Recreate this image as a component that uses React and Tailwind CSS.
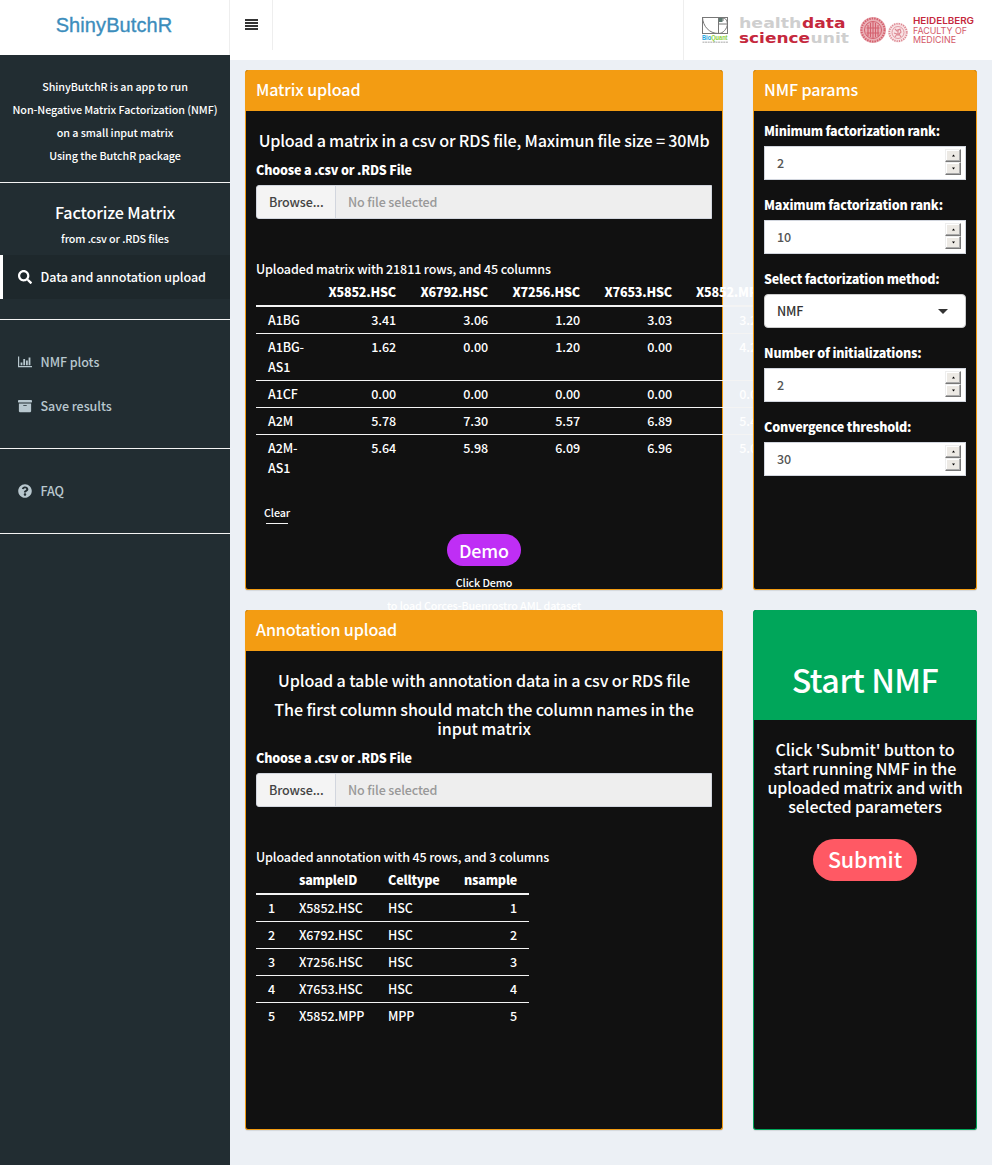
import React from "react";
import { FaSearch, FaArchive, FaQuestionCircle } from "react-icons/fa";

const matrixHead = ["X5852.HSC", "X6792.HSC", "X7256.HSC", "X7653.HSC", "X5852.MPP"];
const matrixRows = [
  ["A1BG", "3.41", "3.06", "1.20", "3.03", "3.22"],
  ["A1BG-AS1", "1.62", "0.00", "1.20", "0.00", "4.22"],
  ["A1CF", "0.00", "0.00", "0.00", "0.00", "0.00"],
  ["A2M", "5.78", "7.30", "5.57", "6.89", "5.42"],
  ["A2M-AS1", "5.64", "5.98", "6.09", "6.96", "5.02"],
];
const annotationRows = [
  ["1", "X5852.HSC", "HSC", "1"],
  ["2", "X6792.HSC", "HSC", "2"],
  ["3", "X7256.HSC", "HSC", "3"],
  ["4", "X7653.HSC", "HSC", "4"],
  ["5", "X5852.MPP", "MPP", "5"],
];

function ChartIcon({ className }) {
  return (
    <svg viewBox="0 0 14 14" className={className} fill="currentColor">
      <path d="M0 1.500h1.200v9.500H14V12.300H0zM2.600 7.500h1.800v2.700H2.600zM5.300 4h1.800v6.200H5.300zM8 5.500h1.800v4.700H8zM10.600 2.500h1.800v7.700h-1.800z" />
    </svg>
  );
}

function BioQuantLogo() {
  return (
    <svg width="30" height="30" viewBox="0 0 30 30" className="block shrink-0">
      <g fill="none" stroke="#777" strokeWidth="1">
        <rect x="1.500" y="2.500" width="25" height="16" />
        <path d="M1.500 2.500C2 11 8 18.500 17.500 18.500V2.500M17.500 18.500C22 18.500 26 14 26.500 9H17.500M22 2.500V6M17.500 9C17.500 5 19 3 22 3C25 3 26 6 26.500 9" />
      </g>
      <path d="M18 3h3.500v4H18z" fill="#5e7a72" />
      <text x="1" y="25" textLength="25.500" lengthAdjust="spacingAndGlyphs" fontFamily="Liberation Sans, sans-serif" fontWeight="700" fontSize="7.600" letterSpacing="0">
        <tspan fill="#21a5e0">Bio</tspan><tspan fill="#8ccf3c">Quant</tspan>
      </text>
      <path d="M1.500 27.300H27" stroke="#c4c4c4" strokeWidth="1.500" strokeDasharray="2 .6" />
    </svg>
  );
}

function HealthDataLogo() {
  const t = { fontFamily: "DejaVu Sans, sans-serif", fontWeight: 700, fontSize: 14.4, letterSpacing: 0, lengthAdjust: "spacingAndGlyphs" };
  return (
    <svg width="112" height="32" viewBox="0 0 112 32" className="block shrink-0">
      <text x="0" y="14" textLength="62.500" fill="#cfcfcf" {...t}>health</text>
      <text x="63" y="14" textLength="43.500" fill="#c5283d" {...t}>data</text>
      <text x="0" y="29" textLength="71" fill="#c5283d" {...t}>science</text>
      <text x="71.500" y="29" textLength="38.500" fill="#cfcfcf" {...t}>unit</text>
    </svg>
  );
}

function HeidelbergLogo() {
  const t = { fontFamily: "Inter, sans-serif", fontSize: 8.8, letterSpacing: 0, lengthAdjust: "spacingAndGlyphs" };
  return (
    <svg width="116" height="30" viewBox="0 0 116 30" className="block shrink-0">
      <g fill="none" stroke="#d4606e">
        <circle cx="13" cy="15" r="13" fill="#eab0b6" stroke="none" />
        <circle cx="13" cy="15" r="11.500" strokeWidth="2" strokeDasharray="1.500 1" />
        <circle cx="13" cy="15" r="8.500" strokeWidth="1" />
        <path d="M8 10v11M10.500 8v14M13 7v16M15.500 8v14M18 10v11M6.500 13h13M6.500 18h13" strokeWidth="1.200" />
        <circle cx="38" cy="17.500" r="10" fill="#f8e2e4" stroke="none" />
        <circle cx="38" cy="17.500" r="8.700" strokeWidth="1.800" strokeDasharray="1.200 1.100" stroke="#dc8791" />
        <circle cx="38" cy="17.500" r="6" strokeWidth=".8" stroke="#dc8791" />
        <path d="M35 14l2 2 3-2 1 3-2 2 2 3M34 18l3 1-2 3M38 14v7" strokeWidth="1.100" stroke="#dc8791" />
      </g>
      <text x="53" y="9" textLength="61" fontWeight="600" fill="#c5283d" {...t}>HEIDELBERG</text>
      <text x="53" y="18.500" textLength="54" fontWeight="400" fill="#d35867" {...t}>FACULTY OF</text>
      <text x="53" y="28" textLength="43" fontWeight="400" fill="#d35867" {...t}>MEDICINE</text>
    </svg>
  );
}

function MenuItem({ icon: Icon, active, children }) {
  return (
    <div className={active
      ? "flex h-11 items-center border-l-[3px] border-white bg-[#1e282c] pl-[15px] text-white"
      : "flex h-11 items-center border-l-[3px] border-transparent pl-[15px] text-[#b8c7ce]"}>
      <Icon className="size-3.5 shrink-0" />
      <span className="ml-[8.500px] tracking-[-0.005em] whitespace-nowrap">{children}</span>
    </div>
  );
}

function Sidebar() {
  return (
    <aside className="flex w-[230px] shrink-0 flex-col bg-[#222d32]">
      <div className="flex h-[55px] items-center justify-center border-r border-[#eee] bg-white pr-px pb-[5px] font-['Liberation_Sans',sans-serif] text-[20px] font-normal tracking-[0.1px] text-[#3c8dbc] [-webkit-text-stroke:0.35px_#3c8dbc]">ShinyButchR</div>
      <div className="h-[127px] pt-5 text-center text-[10.750px] leading-[23px] tracking-[-0.006em] text-white">
        <p>ShinyButchR is an app to run</p>
        <p>Non-Negative Matrix Factorization (NMF)</p>
        <p>on a small input matrix</p>
        <p>Using the ButchR package</p>
      </div>
      <div className="h-[137px] border-t border-[#f4f4f4] pt-[19px] text-center text-white">
        <h4 className="text-[16.120px] leading-5">Factorize Matrix</h4>
        <p className="mt-1.5 mb-[6px] text-[10.750px] leading-[21px]">from .csv or .RDS files</p>
        <MenuItem icon={FaSearch} active>Data and annotation upload</MenuItem>
      </div>
      <div className="h-[129px] border-t border-[#f4f4f4] pt-5">
        <MenuItem icon={ChartIcon}>NMF plots</MenuItem>
        <MenuItem icon={FaArchive}>Save results</MenuItem>
      </div>
      <div className="h-[86px] border-y border-[#f4f4f4] pt-5">
        <MenuItem icon={FaQuestionCircle}>FAQ</MenuItem>
      </div>
    </aside>
  );
}

function Box({ title, className = "", children }) {
  return (
    <section className={"relative h-[520px] rounded-[3px] border border-t-0 border-[#f39c12] bg-[#111] text-white shadow-[0_1px_1px_rgba(0,0,0,0.1)] " + className}>
      <h3 className="h-[41px] rounded-t-[2px] bg-[#f39c12] px-2.5 pt-[9px] text-[16.120px] leading-5">{title}</h3>
      <div className="px-2.5 pt-2.5">{children}</div>
    </section>
  );
}

function FileInput() {
  return (
    <>
      <label className="block text-[12.540px] leading-5 font-black tracking-[-0.015em]">Choose a .csv or .RDS File</label>
      <div className="mt-[5px] flex h-[34px] rounded-l-[3px] border border-[#d2d6de] bg-[#eee] leading-8">
        <span className="w-[79px] rounded-l-[3px] border-r border-[#d2d6de] bg-[#f4f4f4] pl-3 text-[#444]">Browse...</span>
        <span className="pl-3 text-[#999]">No file selected</span>
      </div>
    </>
  );
}

function Spinner() {
  return (
    <span className="flex h-[26px] w-4 flex-col">
      {["M1 3.500h3L2.500 1.500z", "M1 1.500h3L2.500 3.500z"].map((d) => (
        <span key={d} className="flex h-[13px] items-center justify-center border border-t-[#eee] border-r-[#777] border-b-[#777] border-l-[#eee] bg-[#ece9e4] shadow-[inset_-1px_-1px_0_#aaa,inset_1px_1px_0_#fff]">
          <svg width="5" height="5" viewBox="0 0 5 5"><path d={d} fill="#000" /></svg>
        </span>
      ))}
    </span>
  );
}

function Param({ label, value, select }) {
  return (
    <div className="h-[74px]">
      <label className="block text-[12.540px] leading-5 font-black tracking-[-0.015em]">{label}</label>
      <div className={select
        ? "mt-[5px] flex h-[34px] items-center justify-between rounded-[4px] border border-[#ccc] bg-white pr-[17px] pl-3 text-[#333]"
        : "mt-[5px] flex h-[34px] items-start justify-between border border-[#d2d6de] bg-white pt-0.5 pr-1 pl-3 text-[#555]"}>
        <span className={select ? "" : "pt-[3px] leading-[22px]"}>{value}</span>
        {select
          ? <svg width="10" height="5" viewBox="0 0 10 5"><path d="M0 0h10L5 5z" fill="#333" /></svg>
          : <Spinner />}
      </div>
    </div>
  );
}

function MatrixTable() {
  return (
    <table className="w-[520px] table-fixed border-separate border-spacing-0 text-right leading-5">
      <colgroup>
        <col className="w-[60px]" />
        {matrixHead.map((h) => <col key={h} className="w-[92px]" />)}
      </colgroup>
      <thead>
        <tr>
          <th className="border-b-2 border-[#f4f4f4]" />
          {matrixHead.map((h) => <th key={h} className="border-b-2 border-[#f4f4f4] px-3 py-[3px] font-black tracking-[-0.015em]">{h}</th>)}
        </tr>
      </thead>
      <tbody>
        {matrixRows.map((row, r) => (
          <tr key={row[0]}>
            {row.map((cell, c) => (
              <td key={c} className={(r ? "border-t border-[#f4f4f4] " : "") + "py-[3px] align-top " + (c ? "px-3" : "pl-3 text-left")}>{cell}</td>
            ))}
          </tr>
        ))}
      </tbody>
    </table>
  );
}

function AnnotationTable() {
  return (
    <table className="w-[273px] table-fixed border-separate border-spacing-0 text-left leading-5">
      <colgroup>
        <col className="w-[31px]" />
        <col className="w-[89px]" />
        <col className="w-[76px]" />
        <col className="w-[77px]" />
      </colgroup>
      <thead>
        <tr>
          {["", "sampleID", "Celltype", "nsample"].map((h, i) => (
            <th key={i} className={"border-b-2 border-[#f4f4f4] py-[3px] pl-3 font-black tracking-[-0.015em] " + (i === 3 ? "pr-3 text-right" : "")}>{h}</th>
          ))}
        </tr>
      </thead>
      <tbody>
        {annotationRows.map((row, r) => (
          <tr key={row[0]}>
            {row.map((cell, c) => (
              <td key={c} className={(r ? "border-t border-[#f4f4f4] " : "") + "py-[3px] pl-3 " + (c === 3 ? "pr-3 text-right" : "")}>{cell}</td>
            ))}
          </tr>
        ))}
      </tbody>
    </table>
  );
}

export default function App() {
  return (
    <div className="flex h-[1165px] w-[992px] overflow-hidden bg-[#ecf0f5] font-['Noto_Sans_CJK_SC',sans-serif] text-[12.540px] font-medium tracking-[-0.010em] antialiased">
      <Sidebar />
      <div className="flex w-[762px] flex-col">
        <header className="flex h-[60px] justify-between bg-white">
          <div className="flex h-[50px] w-[43px] justify-center border-r border-[#eee] pt-[19px] text-[#333]">
            <svg width="13" height="11" viewBox="0 0 13 11" fill="currentColor">
              <path d="M0 0h13v2H0zM0 3h13v2H0zM0 6h13v2H0zM0 9h13v2H0z" />
            </svg>
          </div>
          <div className="flex w-[309px] border-l border-[#eee] pt-[15px] pl-[17px]">
            <BioQuantLogo />
            <div className="-mt-px ml-[8px]"><HealthDataLogo /></div>
            <div className="ml-[9px]"><HeidelbergLogo /></div>
          </div>
        </header>
        <main className="grid grid-cols-[478px_224px] gap-x-[30px] gap-y-5 px-[15px] pt-2.5">
          <Box title="Matrix upload">
            <h4 className="mt-[9px] mb-2.5 text-center text-[16.120px] leading-5 tracking-[-0.013em] whitespace-nowrap">Upload a matrix in a csv or RDS file, Maximun file size = 30Mb</h4>
            <FileInput />
            <p className="mt-10 leading-5">Uploaded matrix with 21811 rows, and 45 columns</p>
            <MatrixTable />
            <div className="mt-[23px] ml-2.5 flex h-5 w-[22px] items-start justify-center border-b border-[#f4f4f4] text-[10.750px] leading-[18px]">Clear</div>
            <div className="mt-2.5 text-center text-[10.750px] leading-[23px]">
              <button className="mx-auto mb-[5px] block h-8 w-[74px] rounded-full bg-[#bf2ef5] text-[17.900px] leading-[30px]">Demo</button>
              <p>Click Demo</p>
              <p>to load Corces-Buenrostro AML dataset</p>
            </div>
          </Box>
          <Box title="NMF params" className="z-10">
            <Param label="Minimum factorization rank:" value="2" />
            <Param label="Maximum factorization rank:" value="10" />
            <Param label="Select factorization method:" value="NMF" select />
            <Param label="Number of initializations:" value="2" />
            <Param label="Convergence threshold:" value="30" />
          </Box>
          <Box title="Annotation upload">
            <h4 className="mt-[9px] text-center text-[16.120px] leading-5">Upload a table with annotation data in a csv or RDS file</h4>
            <h4 className="mx-auto mt-2.5 mb-2.5 w-[430px] text-center text-[16.120px] leading-[19px]">The first column should match the column names in the input matrix</h4>
            <FileInput />
            <p className="mt-10 leading-5">Uploaded annotation with 45 rows, and 3 columns</p>
            <AnnotationTable />
          </Box>
          <section className="relative h-[520px] rounded-[3px] border border-t-0 border-[#00a65a] bg-[#111] text-center text-white shadow-[0_1px_1px_rgba(0,0,0,0.1)]">
            <h1 className="h-[110px] rounded-t-[2px] bg-[#00a65a] pt-[49px] text-[32.240px] leading-10 tracking-[-0.015em]">Start NMF</h1>
            <h4 className="mt-5 text-[16.120px] leading-[19px] whitespace-nowrap">
              Click 'Submit' button to<br />start running NMF in the<br />uploaded matrix and with<br />selected parameters
            </h4>
            <button className="mx-auto mt-[23px] block h-[42px] w-[104px] rounded-full bg-[#ff5964] pb-0.5 text-[21.500px] leading-10">Submit</button>
          </section>
        </main>
      </div>
    </div>
  );
}
